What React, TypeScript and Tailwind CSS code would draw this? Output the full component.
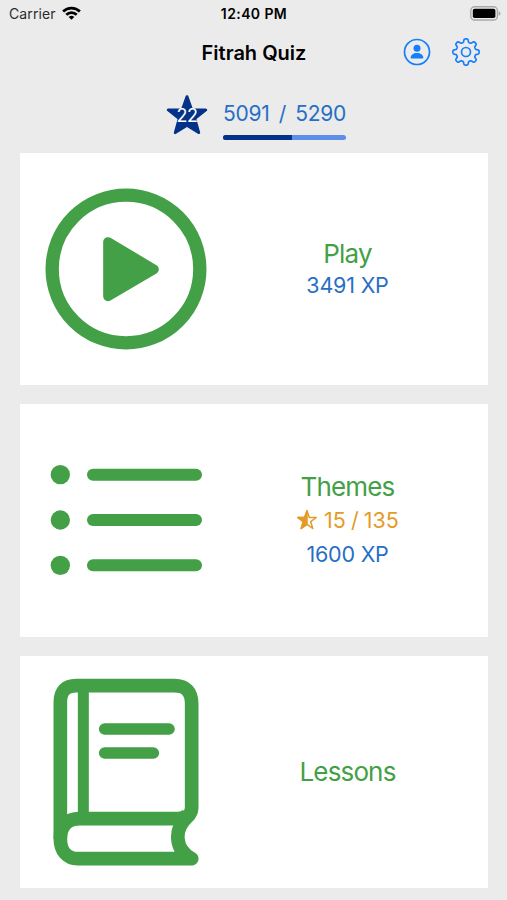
import type { ReactNode } from "react"

const GEAR_PATH = buildGear(8, 11.5, 1.65)

function buildGear(teeth: number, radius: number, depth: number) {
  const points: string[] = []
  for (let i = 0; i < 240; i++) {
    const a = (i / 240) * Math.PI * 2
    const r = radius + depth * Math.tanh(2.2 * Math.cos(teeth * a))
    points.push(`${(15 + r * Math.sin(a)).toFixed(2)} ${(15 - r * Math.cos(a)).toFixed(2)}`)
  }
  return `M${points.join("L")}Z`
}

function StatusBar() {
  return (
    <div className="grid h-[27px] grid-cols-3 items-center pl-[9px] pr-[6px] text-black">
      <div className="flex items-center gap-[6px]">
        <span className="text-[14px] tracking-[0.1px] text-[#2b2b2b]">Carrier</span>
        <svg viewBox="0 0 19 14" className="-mt-px h-[14px] w-[19px]" fill="none" stroke="currentColor" strokeWidth="2.7">
          <path d="M1.1 5.5a12 12 0 0 1 16.8 0" />
          <path d="M4.3 8.7a7.4 7.4 0 0 1 10.4 0" />
          <path d="M6.7 11a4 4 0 0 1 5.6 0l-2.8 2.8z" fill="currentColor" stroke="none" />
        </svg>
      </div>
      <span className="-ml-[2px] whitespace-nowrap text-center text-[14px] font-semibold tracking-[0.4px]">12:40 PM</span>
      <svg viewBox="0 0 31 15" className="-mt-px h-[15px] w-[31px] justify-self-end">
        <rect x="0.8" y="0.8" width="26.6" height="13.2" rx="3.8" fill="#ededed" stroke="#a9a9a9" strokeWidth="1.4" />
        <rect x="2.8" y="2.8" width="22.6" height="9.2" rx="1.8" />
        <path d="M28.6 5v5q1.9-.8 1.9-2.5T28.6 5z" fill="#a9a9a9" />
      </svg>
    </div>
  )
}

function NavBar() {
  return (
    <div className="grid h-[50px] grid-cols-[1fr_auto_1fr] items-center pr-[26px]">
      <h1 className="col-start-2 ml-[27px] pt-px text-[20px] font-semibold tracking-[0px] text-black">Fitrah Quiz</h1>
      <div className="flex items-center justify-end gap-[20px] text-[#157efb]">
        <button aria-label="Profile">
          <svg viewBox="0 0 28 28" className="h-7 w-7" fill="none" stroke="currentColor" strokeWidth="1.7">
            <circle cx="14" cy="14" r="12.5" />
            <circle cx="14" cy="10.2" r="3.5" fill="currentColor" stroke="none" />
            <path d="M7.6 19.6c.3-3 2.8-4.7 6.4-4.7s6.1 1.700 6.400 4.700q0 1-1 1H8.600q-1 0-1-1z" fill="currentColor" stroke="none" />
          </svg>
        </button>
        <button aria-label="Settings">
          <svg viewBox="0 0 30 30" className="h-[30px] w-[30px]" fill="none" stroke="currentColor" strokeWidth="1.7" strokeLinejoin="round">
            <path d={GEAR_PATH} />
            <circle cx="15" cy="15" r="4.5" />
          </svg>
        </button>
      </div>
    </div>
  )
}

function LevelProgress({ level, xp, nextXp }: { level: number; xp: number; nextXp: number }) {
  return (
    <div className="flex h-[75.5px] items-center gap-[15px] pl-[166px]">
      <div className="relative mt-px h-[42px] w-[42px]">
        <svg viewBox="0 0 42 42" className="h-full w-full text-[#043289]" fill="currentColor" stroke="currentColor" strokeWidth="3" strokeLinejoin="round">
          <path d="M21 2.700l4.700 13.200h14L28.700 24.500l4 14.100L21 31.200 9.300 38.600l4-14.100L2.300 15.900h14z" />
        </svg>
        <span className="absolute inset-0 flex items-center justify-center pt-[2px] text-[18px] leading-none tracking-[-0.6px] text-white">
          {level}
        </span>
      </div>
      <div className="w-[123px] pt-3">
        <p className="whitespace-nowrap text-[21px] leading-[26px] tracking-[-0.25px] text-[#276fc5] [word-spacing:3.5px]">
          {xp} / {nextXp}
        </p>
        <div className="mt-2 h-[5px] overflow-hidden rounded-full bg-[#5c8eea]">
          <div className="h-full w-[56%] bg-[#043289]" />
        </div>
      </div>
    </div>
  )
}

function MenuCard({ icon, title, children }: { icon: ReactNode; title: string; children?: ReactNode }) {
  return (
    <section className="flex h-[232.5px] shrink-0 items-center bg-white pl-[25px]">
      <div className="w-[162px] text-[#43a047]">{icon}</div>
      <div className="flex flex-1 flex-col items-center whitespace-nowrap text-[21.5px] tracking-[-0.2px] text-[#276fc5]">
        <h2 className="pt-px text-[26px] leading-8 tracking-[-0.85px] text-[#43a047]">{title}</h2>
        {children}
      </div>
    </section>
  )
}

function PlayIcon() {
  return (
    <svg viewBox="45 38 486 486" className="block w-full" fill="none" stroke="currentColor">
      <circle cx="288" cy="281" r="221.500" strokeWidth="40" />
      <path d="M234 200v163l138-81z" fill="currentColor" strokeWidth="29" strokeLinejoin="round" />
    </svg>
  )
}

function ListIcon() {
  return (
    <svg viewBox="45 29 486 360" className="block w-full" fill="currentColor">
      {[73, 209, 345].map((y) => (
        <g key={y}>
          <circle cx="91" cy={y} r="29" />
          <rect x="171" y={y - 18} width="345" height="36" rx="18" />
        </g>
      ))}
    </svg>
  )
}

function BookIcon() {
  return (
    <svg viewBox="45 -3 486 648" className="block w-full" fill="none" stroke="currentColor" strokeWidth="41">
      <path d="M485 581H143C112 581 91 558 91 521V112Q91 62 139 62H433Q485 62 485 116V428Q485 443 472 456C432 492 432 552 485 581" strokeLinecap="round" strokeLinejoin="round" />
      <path d="M91 521C91 484 112 461 149 461H445Q466 460 475 446" />
      <path d="M160 70V460" strokeWidth="33" />
      <path d="M224 192H417M224 264H370" strokeWidth="35" strokeLinecap="round" />
    </svg>
  )
}

function HalfStar() {
  return (
    <svg viewBox="0 0 22 22" className="h-[22px] w-[22px]" fill="none" stroke="currentColor" strokeWidth="1.5" strokeLinejoin="round">
      <path d="M11 1.800l2.300 6.700h7l-5.600 4.200 2.100 6.800L11 15.400l-5.800 4.100 2.100-6.800L1.700 8.500h7z" />
      <path d="M11 1.800v13.600l-5.800 4.100 2.100-6.800L1.700 8.500h7z" fill="currentColor" />
    </svg>
  )
}

export default function App() {
  return (
    <main className="h-[900px] w-[507px] overflow-hidden bg-[#ebebeb] font-['Inter',sans-serif]">
      <StatusBar />
      <NavBar />
      <LevelProgress level={22} xp={5091} nextXp={5290} />
      <div className="flex flex-col gap-[19px] pl-5 pr-[19px]">
        <MenuCard icon={<PlayIcon />} title="Play">
          <p className="leading-[31px]">3491 XP</p>
        </MenuCard>
        <MenuCard icon={<ListIcon />} title="Themes">
          <p className="flex items-center gap-1.5 leading-[34px] tracking-normal text-[#e49b27]">
            <HalfStar />
            <span className="[word-spacing:-1px]">15 / 135</span>
          </p>
          <p className="leading-[34px]">1600 XP</p>
        </MenuCard>
        <MenuCard icon={<BookIcon />} title="Lessons" />
      </div>
    </main>
  )
}
